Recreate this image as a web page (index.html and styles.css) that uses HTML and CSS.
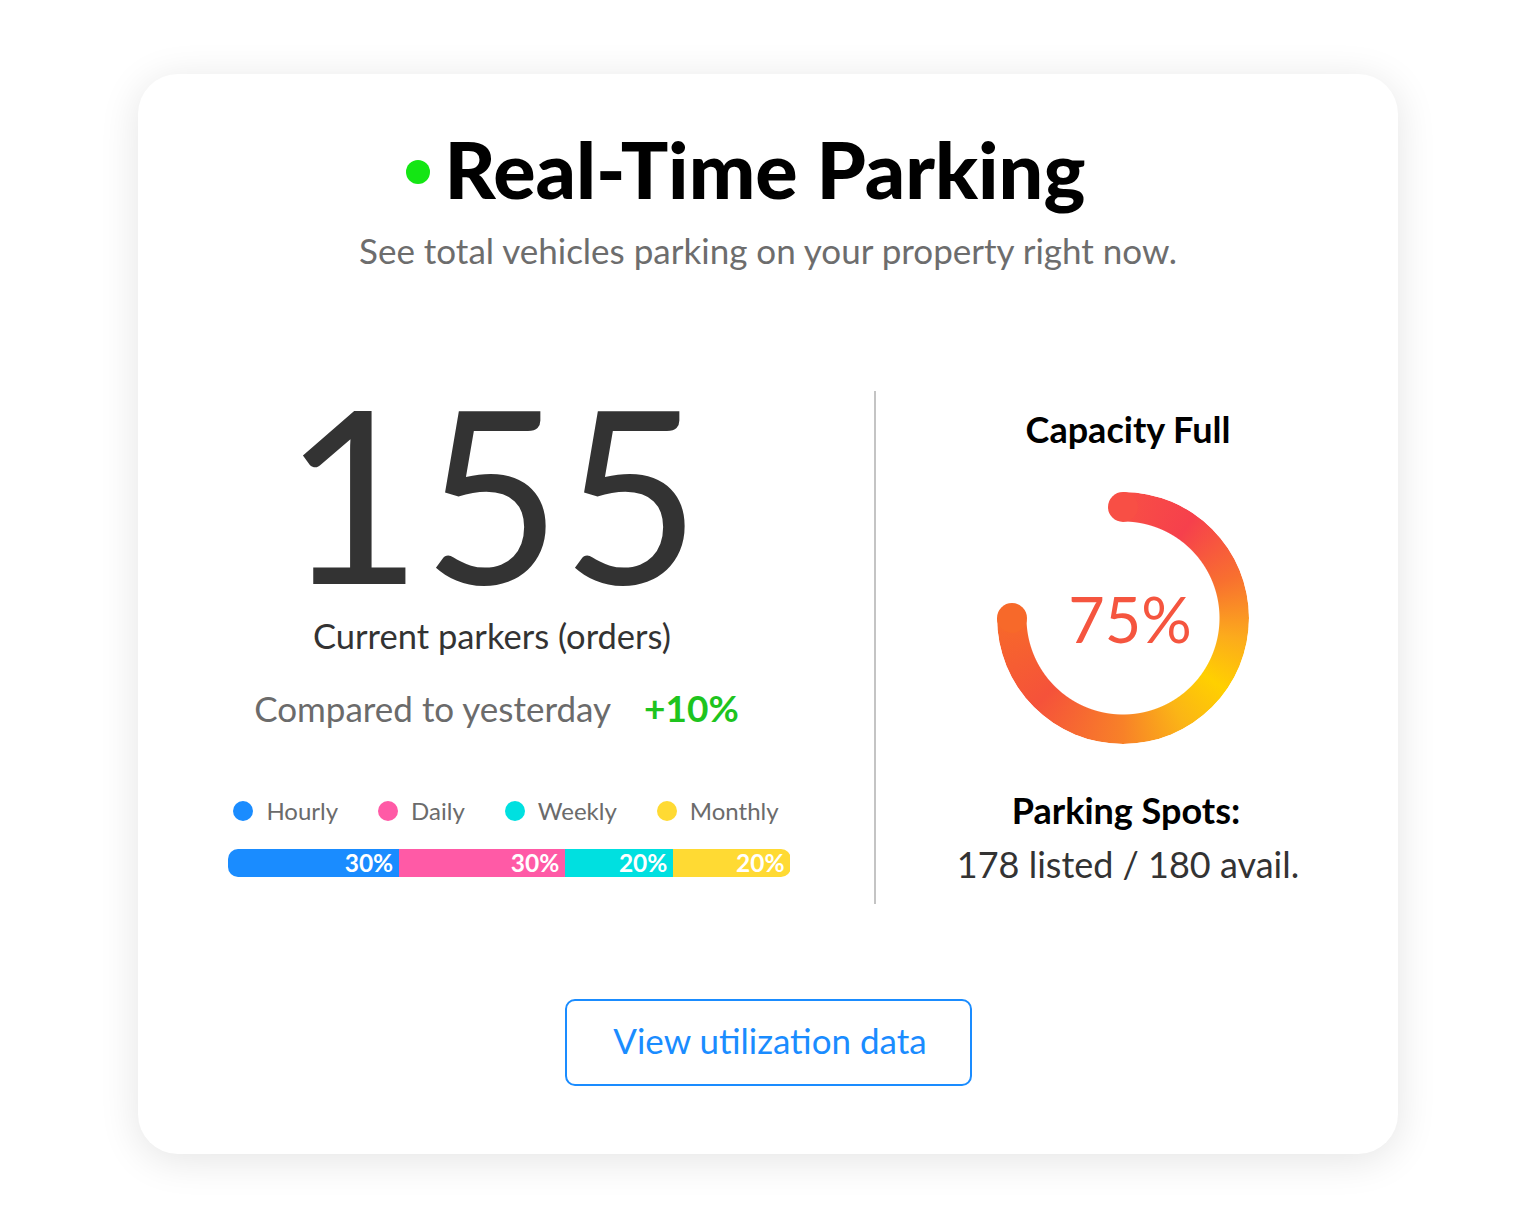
FILE: index.html
```html
<!DOCTYPE html>
<html lang="en">
<head>
  <meta charset="UTF-8">
  <title>Real-Time Parking</title>
  <link rel="stylesheet" href="styles.css">
</head>
<body>
  <div class="card">
    <h1 class="title">Real-Time Parking</h1>
    <p class="subtitle">See total vehicles parking on your property right now.</p>

    <div class="stats">
      <div class="stats-left">
        <div class="count">
          <div class="count-num">155</div>
          <div class="count-label">Current parkers (orders)</div>
          <div class="compare">
            <span>Compared to yesterday</span>
            <span class="compare-up">+10%</span>
          </div>
        </div>

        <div class="legend">
          <span class="legend-item"><i class="dot hourly"></i>Hourly</span>
          <span class="legend-item"><i class="dot daily"></i>Daily</span>
          <span class="legend-item"><i class="dot weekly"></i>Weekly</span>
          <span class="legend-item"><i class="dot monthly"></i>Monthly</span>
        </div>

        <div class="split-bar">
          <div class="seg hourly" style="width: 30.5%">30%</div>
          <div class="seg daily" style="width: 29.5%">30%</div>
          <div class="seg weekly" style="width: 19.2%">20%</div>
          <div class="seg monthly" style="width: 20.8%">20%</div>
        </div>
      </div>

      <div class="divider"></div>

      <div class="stats-right">
        <div class="cap-title">Capacity Full</div>
        <div class="gauge">
          <div class="gauge-ring"></div>
          <span class="gauge-cap cap-start"></span>
          <span class="gauge-cap cap-end"></span>
          <div class="gauge-value">75%</div>
        </div>
        <div class="spots-title">Parking Spots:</div>
        <div class="spots">178 listed / 180 avail.</div>
      </div>
    </div>

    <button class="view-btn">View utilization data</button>
  </div>
</body>
</html>
```

FILE: styles.css
```css
body {
  height: 100vh;
  margin: 0;
  background: #fff;
  display: flex;
  justify-content: center;
  align-items: center;
  font-family: Lato, 'Noto Sans', sans-serif;
}

.card {
  width: 1260px;
  height: 1080px;
  box-sizing: border-box;
  padding-top: 48px;
  border-radius: 40px;
  background: #fff;
  box-shadow: 0 6px 40px rgba(0, 0, 0, 0.11);
  display: flex;
  flex-direction: column;
  align-items: center;
}

.title {
  position: relative;
  margin: 0 0 0 -6px;
  font-size: 79px;
  line-height: 1.2;
  font-weight: 900;
  color: #000;
}

.title::before {
  content: '';
  position: absolute;
  right: calc(100% + 15px);
  top: 38px;
  width: 24px;
  height: 24px;
  border-radius: 50%;
  background: #14e614;
}

.subtitle {
  margin: 13px 0 0;
  font-size: 35px;
  line-height: 1.2;
  color: #6d6d6d;
}

/* two columns split by a thin rule */
.stats {
  align-self: stretch;
  margin-top: 120px;
  display: grid;
  grid-template-columns: 736px 2px 1fr;
  height: 513px;
}

.stats-left {
  padding-left: 6px;
  display: flex;
  flex-direction: column;
  align-items: center;
}

.count {
  display: flex;
  flex-direction: column;
  align-items: center;
  padding-right: 34px;
}

.count-num {
  font-size: 240px;
  line-height: 200px;
  color: #333;
}

.count-label {
  margin-top: 24px;
  font-size: 34.5px;
  line-height: 1.2;
  color: #333;
}

.compare {
  margin: 30px 0 0 9px;
  display: flex;
  align-items: baseline;
  gap: 33px;
  font-size: 35px;
  line-height: 42px;
  color: #6b6b6b;
}

.compare-up {
  font-size: 37px;
  line-height: 1;
  color: #1ec41e;
  font-weight: bold;
}

.legend {
  margin: 68px 6px 0 0;
  display: flex;
  gap: 40px;
  font-size: 24px;
  line-height: 1.2;
  color: #6b6b6b;
}

.legend-item {
  display: flex;
  align-items: center;
  gap: 13px;
}

.dot {
  width: 20px;
  height: 20px;
  border-radius: 50%;
}

.hourly { background: #1a8cff; }
.daily { background: #ff5aa6; }
.weekly { background: #00e0e0; }
.monthly { background: #ffda33; }

.split-bar {
  margin-top: 24px;
  width: 563px;
  height: 28px;
  border-radius: 10px;
  overflow: hidden;
  display: flex;
}

.seg {
  box-sizing: border-box;
  padding-right: 6px;
  text-align: right;
  font-size: 24.5px;
  line-height: 28px;
  font-weight: bold;
  color: #fff;
}

.divider {
  background: #c4c4c4;
}

.stats-right {
  padding-right: 18px;
  display: flex;
  flex-direction: column;
  align-items: center;
}

.cap-title,
.spots-title {
  font-size: 36px;
  line-height: 1.2;
  font-weight: bold;
  color: #000;
}

.cap-title {
  margin-top: 17px;
}

.gauge {
  position: relative;
  width: 252px;
  height: 252px;
  margin: 41px 10px 0 0;
}

.gauge-ring {
  width: 100%;
  height: 100%;
  border-radius: 50%;
  background: conic-gradient(#f84f45 0deg, #f6404c 35deg, #f8702f 70deg, #fcab1c 100deg,
    #ffd000 125deg, #fbb516 150deg, #f88128 180deg, #f5523a 225deg, #f7692a 270deg, #f7692a 360deg);
  -webkit-mask: radial-gradient(farthest-side, transparent calc(100% - 30px), #000 calc(100% - 29px)),
    conic-gradient(#000 0 270deg, transparent 270deg);
  -webkit-mask-composite: source-in;
  mask: radial-gradient(farthest-side, transparent calc(100% - 30px), #000 calc(100% - 29px)),
    conic-gradient(#000 0 270deg, transparent 270deg);
  mask-composite: intersect;
}

.gauge-cap {
  position: absolute;
  width: 30px;
  height: 30px;
  border-radius: 50%;
}

.cap-start {
  top: 0;
  left: 111px;
  background: #f84f45;
}

.cap-end {
  top: 111px;
  left: 0;
  background: #f7692a;
}

.gauge-value {
  position: absolute;
  inset: 0;
  padding-left: 14px;
  display: flex;
  justify-content: center;
  align-items: center;
  font-size: 63px;
  color: #f5553f;
}

.spots-title {
  margin-top: 45px;
  margin-left: -4px;
}

.spots {
  margin-top: 10px;
  font-size: 36px;
  line-height: 1.2;
  color: #333;
}

.view-btn {
  margin-top: 95px;
  width: 407px;
  height: 87px;
  padding: 0 0 6px 4px;
  border: 2px solid #1a8cff;
  border-radius: 10px;
  background: #fff;
  font-family: inherit;
  font-size: 35px;
  color: #1a8cff;
  cursor: pointer;
}
```
